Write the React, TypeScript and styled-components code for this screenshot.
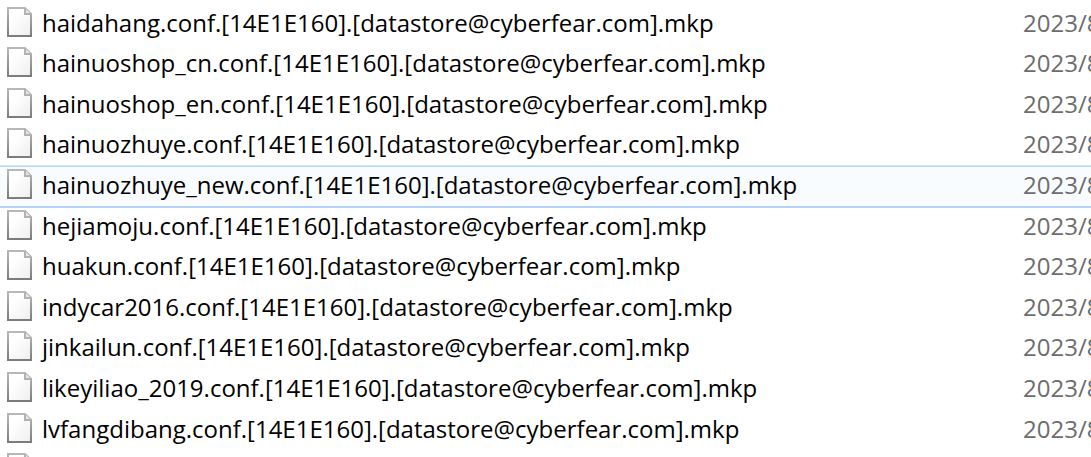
import React from "react";
import styled, { createGlobalStyle } from "styled-components";

const Global = createGlobalStyle`
  * { box-sizing: border-box; }
  body {
    margin: 0;
    background: #fff;
    color: #000;
    font-family: "Open Sans", "Noto Sans CJK SC", sans-serif;
    font-size: 24px;
  }
`;

const Pane = styled.main`
  height: 100vh;
  padding-top: 4px;
  overflow: hidden;
`;

const Table = styled.table`
  width: 100%;
  border-collapse: collapse;
  table-layout: fixed;
`;

const Row = styled.tr<{ $active?: boolean }>`
  height: 41px;
  background: ${(p) => (p.$active ? "#f8fcff" : "transparent")};
  box-shadow: ${(p) => (p.$active ? "inset 0 1px #b5d2fc, 0 -1px #dbe9fd, inset 0 -1px #b5d2fc, 0 1px #b5d2fc" : "none")};

  &:nth-child(5n + 1),
  &:nth-child(5n + 3) {
    height: 40px;
  }
`;

const NameCell = styled.td`
  padding: 0 0 0 7px;
  vertical-align: top;
`;

const DateCell = styled.td`
  width: 68px;
  padding: 0;
  overflow: hidden;
  vertical-align: top;
  white-space: nowrap;
  color: #6d6d6d;
  line-height: 38px;
`;

const File = styled.div`
  display: flex;
  align-items: flex-start;
  gap: 9px;
  line-height: 38px;
  white-space: nowrap;
`;

const Icon = styled.svg`
  flex: none;
  width: 26px;
  height: 30px;
  margin-top: 3px;
`;

const PageIcon = () => (
  <Icon viewBox="0 0 26 30" aria-hidden="true">
    <defs>
      <linearGradient id="paper" x1="0" y1="0" x2="1" y2="1">
        <stop offset="0.3" stopColor="#ffffff" />
        <stop offset="1" stopColor="#f0eeee" />
      </linearGradient>
      <linearGradient id="edge" x1="0" y1="0" x2="0" y2="1">
        <stop offset="0" stopColor="#b8b8b8" />
        <stop offset="1" stopColor="#7c7c7c" />
      </linearGradient>
    </defs>
    <path d="M1 1H18L24 7V29H1Z" fill="url(#paper)" stroke="url(#edge)" strokeWidth="2" />
    <path d="M18 1V7H24" fill="#e6e6e6" stroke="#b2b2b2" strokeWidth="2" />
  </Icon>
);

const names = [
  "haidahang",
  "hainuoshop_cn",
  "hainuoshop_en",
  "hainuozhuye",
  "hainuozhuye_new",
  "hejiamoju",
  "huakun",
  "indycar2016",
  "jinkailun",
  "likeyiliao_2019",
  "lvfangdibang",
];

export default function App() {
  return (
    <Pane>
      <Global />
      <Table>
        <tbody>
          {names.map((name) => (
            <Row key={name} $active={name === "hainuozhuye_new"}>
              <NameCell>
                <File>
                  <PageIcon />
                  {name}.conf.[14E1E160].[datastore@cyberfear.com].mkp
                </File>
              </NameCell>
              <DateCell>2023/8</DateCell>
            </Row>
          ))}
          <Row>
            <NameCell>
              <File>
                <PageIcon />
              </File>
            </NameCell>
            <DateCell />
          </Row>
        </tbody>
      </Table>
    </Pane>
  );
}
